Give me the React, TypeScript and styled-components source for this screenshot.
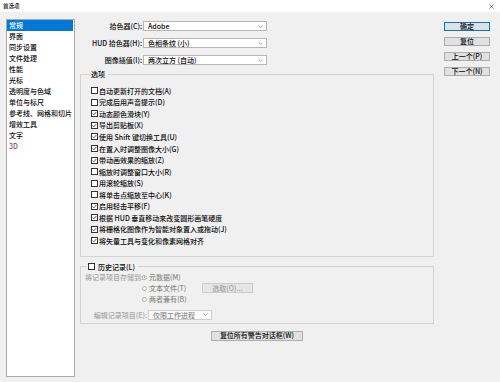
import React from "react";
import styled, { createGlobalStyle } from "styled-components";

const GlobalStyle = createGlobalStyle`
  * { box-sizing: border-box; }
  html, body { margin: 0; padding: 0; }
  body {
    width: 500px;
    height: 382px;
    overflow: hidden;
    background: #f0f0f0;
    font-family: "Noto Sans CJK SC", "Liberation Sans", sans-serif;
    font-size: 7px;
    font-weight: 500;
    color: #0a0a0a;
  }
`;

const Window = styled.div`
  width: 500px;
  height: 382px;
  display: flex;
  flex-direction: column;
  background: #f0f0f0;
`;

const TitleBar = styled.div`
  height: 12px;
  flex-shrink: 0;
  background: #ffffff;
  display: flex;
  align-items: center;
  justify-content: space-between;
  padding: 0 6px 0 3px;
  font-size: 5.5px;
  color: #222;
`;

const Body = styled.div`
  flex: 1;
  min-height: 0;
  display: flex;
  gap: 5px;
  padding: 7px 10px 5px 6px;
`;

const Sidebar = styled.ul`
  width: 69px;
  flex-shrink: 0;
  margin: 0;
  padding: 0;
  list-style: none;
  background: #ffffff;
  border: 1px solid #a9a9a9;
`;

const SidebarItem = styled.li<{ $selected?: boolean; $tint?: string }>`
  height: 11px;
  line-height: 11px;
  padding-left: 2px;
  margin-right: 1px;
  white-space: nowrap;
  background: ${(p) => (p.$selected ? "#0078d7" : "transparent")};
  color: ${(p) => (p.$selected ? "#ffffff" : p.$tint || "#0a0a0a")};
`;

const Main = styled.div`
  width: 354px;
  flex-shrink: 0;
  display: flex;
  flex-direction: column;
`;

const Fields = styled.div`
  margin-top: 2px;
  display: flex;
  flex-direction: column;
  gap: 7px;
`;

const FieldRow = styled.div`
  display: grid;
  grid-template-columns: 62px 124px;
  column-gap: 1px;
  height: 10px;
  align-items: center;
`;

const FieldLabel = styled.span<{ $disabled?: boolean }>`
  text-align: right;
  white-space: nowrap;
  line-height: 10px;
  color: ${(p) => (p.$disabled ? "#a6a6a6" : "#0a0a0a")};
`;

const Select = styled.div<{ $disabled?: boolean }>`
  height: 10px;
  display: flex;
  align-items: center;
  justify-content: space-between;
  padding: 0 3px 0 4px;
  background: ${(p) => (p.$disabled ? "#fbfbfb" : "#ffffff")};
  border: 1px solid ${(p) => (p.$disabled ? "#cfcfcf" : "#b6b6b6")};
  color: ${(p) => (p.$disabled ? "#8a8a8a" : "#0a0a0a")};
  white-space: nowrap;
  line-height: 8px;
`;

const Group = styled.fieldset<{ $pad: string }>`
  margin: 0;
  min-width: 0;
  border: 1px solid #d3d3d3;
  padding: ${(p) => p.$pad};
`;

const OptionsGroup = styled(Group)`
  margin-top: 4px;
`;

const HistoryGroup = styled(Group)`
  margin-top: 5px;
`;

const Legend = styled.legend<{ $ml: number }>`
  height: 10px;
  line-height: 10px;
  padding: 0 3px 0 2px;
  margin-left: ${(p) => p.$ml}px;
  display: flex;
  align-items: center;
  gap: 1px;
  white-space: nowrap;
`;

const CheckList = styled.div`
  display: flex;
  flex-direction: column;
`;

const CheckRow = styled.label`
  height: 11.56px;
  display: flex;
  align-items: center;
  gap: 1px;
  white-space: nowrap;
`;

const Box = styled.span`
  width: 7px;
  height: 7px;
  flex-shrink: 0;
  border: 1px solid #333333;
  background: #ffffff;
  display: flex;
  align-items: center;
  justify-content: center;
`;

const StoreRow = styled.div`
  display: grid;
  grid-template-columns: 57px auto;
  align-items: start;
`;

const DimLabel = styled.span`
  line-height: 11px;
  color: #a6a6a6;
  white-space: nowrap;
`;

const RadioGrid = styled.div`
  display: grid;
  grid-template-columns: 60px 52px;
  grid-auto-rows: 11px;
  align-items: center;
`;

const RadioRow = styled.div`
  grid-column: 1;
  display: flex;
  align-items: center;
  gap: 2px;
  color: #8a8a8a;
  white-space: nowrap;
`;

const Radio = styled.span<{ $on?: boolean }>`
  width: 5px;
  height: 5px;
  border-radius: 50%;
  border: 1px solid #b3b3b3;
  background: #ffffff;
  display: flex;
  align-items: center;
  justify-content: center;
  &::after {
    content: "";
    width: 1.6px;
    height: 1.6px;
    border-radius: 50%;
    background: ${(p) => (p.$on ? "#9a9a9a" : "transparent")};
  }
`;

const PickButton = styled.div`
  grid-column: 2;
  grid-row: 2;
  height: 9.5px;
  width: 51px;
  display: flex;
  align-items: center;
  justify-content: center;
  background: #e6e6e6;
  border: 1px solid #cccccc;
  color: #a3a3a3;
  white-space: nowrap;
  line-height: 1;
`;

const EditRow = styled.div`
  margin-top: 5px;
  padding-left: 6px;
  display: grid;
  grid-template-columns: 56px 64px;
  column-gap: 1px;
  align-items: center;
  height: 10px;
`;

const ResetAllButton = styled.div`
  align-self: center;
  margin-top: 7px;
  width: 92px;
  height: 10px;
  display: flex;
  align-items: center;
  justify-content: center;
  background: #e1e1e1;
  border: 1px solid #adadad;
  white-space: nowrap;
  line-height: 1;
`;

const ButtonColumn = styled.div`
  width: 46px;
  margin-left: 5px;
  flex-shrink: 0;
  padding-top: 2.5px;
  display: flex;
  flex-direction: column;
  gap: 6px;
`;

const DialogButton = styled.div<{ $default?: boolean }>`
  height: 9px;
  display: flex;
  align-items: center;
  justify-content: center;
  background: #e1e1e1;
  border: 1px solid ${(p) => (p.$default ? "#0078d7" : "#adadad")};
  white-space: nowrap;
  line-height: 1;
`;

const Chevron = () => (
  <svg width="5" height="3" viewBox="0 0 5 3" style={{ flexShrink: 0 }}>
    <polyline points="0.5,0.5 2.5,2.4 4.5,0.5" fill="none" stroke="#7a7a7a" strokeWidth="0.7" />
  </svg>
);

const CheckMark = () => (
  <svg width="5" height="5" viewBox="0 0 5 5">
    <polyline points="0.7,2.5 1.9,3.8 4.3,1" fill="none" stroke="#333" strokeWidth="0.8" />
  </svg>
);

const CloseIcon = () => (
  <svg width="5" height="5" viewBox="0 0 5 5">
    <path d="M0.5 0.5 L4.5 4.5 M4.5 0.5 L0.5 4.5" stroke="#222" strokeWidth="0.6" />
  </svg>
);

const Checkbox = ({ checked }: { checked?: boolean }) => <Box>{checked && <CheckMark />}</Box>;

const sidebarItems = [
  "常规",
  "界面",
  "同步设置",
  "文件处理",
  "性能",
  "光标",
  "透明度与色域",
  "单位与标尺",
  "参考线、网格和切片",
  "增效工具",
  "文字",
  "3D",
];

const options: { label: string; checked: boolean }[] = [
  { label: "自动更新打开的文档(A)", checked: false },
  { label: "完成后用声音提示(D)", checked: false },
  { label: "动态颜色滑块(Y)", checked: true },
  { label: "导出剪贴板(X)", checked: true },
  { label: "使用 Shift 键切换工具(U)", checked: true },
  { label: "在置入时调整图像大小(G)", checked: true },
  { label: "带动画效果的缩放(Z)", checked: true },
  { label: "缩放时调整窗口大小(R)", checked: false },
  { label: "用滚轮缩放(S)", checked: false },
  { label: "将单击点缩放至中心(K)", checked: false },
  { label: "启用轻击平移(F)", checked: true },
  { label: "根据 HUD 垂直移动来改变圆形画笔硬度", checked: true },
  { label: "将栅格化图像作为智能对象置入或拖动(J)", checked: true },
  { label: "将矢量工具与变化和像素网格对齐", checked: true },
];

const fields = [
  { label: "拾色器(C):", value: "Adobe" },
  { label: "HUD 拾色器(H):", value: "色相条纹 (小)" },
  { label: "图像插值(I):", value: "两次立方 (自动)" },
];

export default function App() {
  return (
    <>
      <GlobalStyle />
      <Window>
        <TitleBar>
          <span>首选项</span>
          <CloseIcon />
        </TitleBar>
        <Body>
          <Sidebar>
            {sidebarItems.map((s, i) => (
              <SidebarItem key={s} $selected={i === 0} $tint={s === "3D" ? "#8a3f73" : undefined}>
                {s}
              </SidebarItem>
            ))}
          </Sidebar>
          <Main>
            <Fields>
              {fields.map((f) => (
                <FieldRow key={f.label}>
                  <FieldLabel>{f.label}</FieldLabel>
                  <Select>
                    <span>{f.value}</span>
                    <Chevron />
                  </Select>
                </FieldRow>
              ))}
            </Fields>
            <OptionsGroup $pad="6px 10px 9px 10px">
              <Legend $ml={-2}>选项</Legend>
              <CheckList>
                {options.map((o) => (
                  <CheckRow key={o.label}>
                    <Checkbox checked={o.checked} />
                    <span>{o.label}</span>
                  </CheckRow>
                ))}
              </CheckList>
            </OptionsGroup>
            <HistoryGroup $pad="0 4px 3px 4px">
              <Legend $ml={1}>
                <Checkbox />
                <span style={{ marginLeft: 2 }}>历史记录(L)</span>
              </Legend>
              <StoreRow>
                <DimLabel>将记录项目存储到:</DimLabel>
                <RadioGrid>
                  <RadioRow>
                    <Radio $on />
                    <span>元数据(M)</span>
                  </RadioRow>
                  <RadioRow>
                    <Radio />
                    <span>文本文件(T)</span>
                  </RadioRow>
                  <PickButton>选取(O)...</PickButton>
                  <RadioRow>
                    <Radio />
                    <span>两者兼有(B)</span>
                  </RadioRow>
                </RadioGrid>
              </StoreRow>
              <EditRow>
                <FieldLabel $disabled>编辑记录项目(E):</FieldLabel>
                <Select $disabled>
                  <span>仅限工作进程</span>
                  <Chevron />
                </Select>
              </EditRow>
            </HistoryGroup>
            <ResetAllButton>复位所有警告对话框(W)</ResetAllButton>
          </Main>
          <ButtonColumn>
            <DialogButton $default>确定</DialogButton>
            <DialogButton>复位</DialogButton>
            <DialogButton>上一个(P)</DialogButton>
            <DialogButton>下一个(N)</DialogButton>
          </ButtonColumn>
        </Body>
      </Window>
    </>
  );
}
